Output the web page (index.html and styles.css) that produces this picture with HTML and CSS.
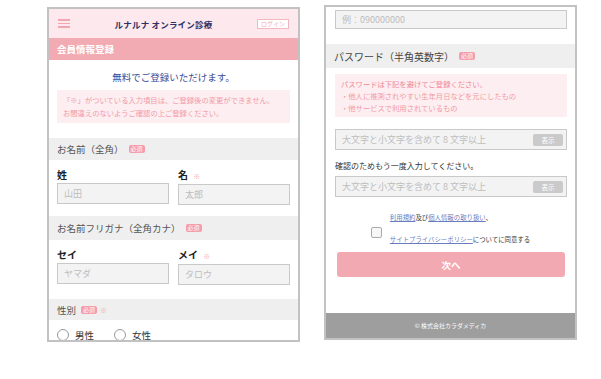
FILE: index.html
```html
<!DOCTYPE html>
<html lang="ja">
<head>
    <meta charset="UTF-8">
    <meta name="viewport" content="width=device-width, initial-scale=1.0">
    <title>会員情報登録</title>
    <link rel="stylesheet" href="styles.css">
</head>
<body>

    <div class="screens">

        <!-- 1画面目 -->
        <div class="phone phone-left">
            <div class="header">
                <div class="menu-btn"><span></span><span></span><span></span></div>
                <div class="logo">ルナルナ オンライン診療</div>
                <div class="login-btn">ログイン</div>
            </div>
            <div class="page-title">会員情報登録</div>

            <p class="lead">無料でご登録いただけます。</p>
            <div class="notice">
                「※」がついている入力項目は、ご登録後の変更ができません。<br>
                お間違えのないようご確認の上ご登録ください。
            </div>

            <div class="section-head first">お名前（全角）<span class="badge">必須</span></div>
            <div class="name-row">
                <div class="field">
                    <label>姓</label>
                    <div class="input">山田</div>
                </div>
                <div class="field">
                    <label>名 <span class="mark">※</span></label>
                    <div class="input">太郎</div>
                </div>
            </div>

            <div class="section-head kana">お名前フリガナ（全角カナ）<span class="badge">必須</span></div>
            <div class="name-row second">
                <div class="field">
                    <label>セイ</label>
                    <div class="input">ヤマダ</div>
                </div>
                <div class="field">
                    <label>メイ <span class="mark">※</span></label>
                    <div class="input">タロウ</div>
                </div>
            </div>

            <div class="section-head gender">性別<span class="badge">必須</span><span class="mark">※</span></div>
            <div class="radio-row">
                <span class="radio"></span><span class="radio-label">男性</span>
                <span class="radio"></span><span class="radio-label">女性</span>
            </div>
        </div>

        <!-- 2画面目 -->
        <div class="phone phone-right">
            <div class="input tel">例：090000000</div>

            <div class="section-head pass">パスワード（半角英数字）<span class="badge">必須</span></div>
            <div class="notice pass-notice">
                <strong>パスワードは下記を避けてご登録ください。</strong><br>
                ・他人に推測されやすい生年月日などを元にしたもの<br>
                ・他サービスで利用されているもの
            </div>

            <div class="input pass-input">大文字と小文字を含めて 8 文字以上<span class="show-btn">表示</span></div>
            <p class="confirm-text">確認のためもう一度入力してください。</p>
            <div class="input pass-input confirm">大文字と小文字を含めて 8 文字以上<span class="show-btn">表示</span></div>

            <div class="agree">
                <span class="checkbox"></span>
                <div class="agree-text">
                    <a href="#">利用規約</a>及び<a href="#">個人情報の取り扱い</a>、<br>
                    <a href="#">サイトプライバシーポリシー</a>についてに同意する
                </div>
            </div>

            <button class="next-btn">次へ</button>

            <div class="footer">© 株式会社カラダメディカ</div>
        </div>

    </div>

</body>
</html>
```

FILE: styles.css
```css
* {
    margin: 0;
    padding: 0;
    box-sizing: border-box;
    font-family: 'Noto Sans CJK JP', 'Noto Sans', sans-serif;
}

body {
    background-color: #fff;
    color: #333;
}

.screens {
    display: flex;
    align-items: flex-start;
    gap: 24px;
    padding-left: 47px;
}

.phone {
    width: 253px;
    height: 335px;
    border: 2px solid #c2c2c2;
    background-color: #fff;
    overflow: hidden;
}

.phone-left {
    margin-top: 7px;
}

.phone-right {
    margin-top: 5px;
    display: flex;
    flex-direction: column;
}

/* ヘッダー */
.header {
    height: 29px;
    background-color: #fde9ed;
    display: flex;
    align-items: center;
    padding: 0 9px 0 9px;
}

.menu-btn {
    width: 12px;
    display: flex;
    flex-direction: column;
    gap: 2px;
}

.menu-btn span {
    display: block;
    height: 1.5px;
    background-color: #f2a6b0;
}

.logo {
    flex: 1;
    text-align: center;
    font-size: 8.5px;
    font-weight: 700;
    color: #2d2f66;
    letter-spacing: 0.2px;
}

.login-btn {
    width: 32px;
    height: 10px;
    border: 1px solid #f3b7c0;
    background-color: #fff;
    color: #f3a8b2;
    font-size: 6px;
    line-height: 8px;
    text-align: center;
}

.page-title {
    height: 22px;
    line-height: 22px;
    background-color: #f2aab3;
    color: #fff;
    font-size: 9.5px;
    font-weight: 700;
    padding-left: 8px;
}

.lead {
    text-align: center;
    color: #3d4c97;
    font-size: 9.5px;
    line-height: 12px;
    padding: 11px 0 7px;
}

.notice {
    margin: 0 8px;
    background-color: #fdeef1;
    color: #f29aa6;
    font-size: 7.3px;
    line-height: 12.5px;
    padding: 4px 6px;
}

/* セクション見出し */
.section-head {
    background-color: #eeefee;
    color: #555;
    font-size: 9.5px;
    padding-left: 8px;
    display: flex;
    align-items: center;
}

.section-head.first {
    margin-top: 15px;
    height: 22px;
}

.section-head.kana {
    height: 24px;
}

.section-head.gender {
    height: 21px;
}

.badge {
    display: inline-block;
    width: 16px;
    height: 8px;
    background-color: #f59cab;
    color: #fff;
    font-size: 6px;
    line-height: 8px;
    text-align: center;
    border-radius: 2px;
    margin-left: 5px;
}

.mark {
    color: #f6a9b4;
    font-size: 7px;
    font-weight: 400;
    margin-left: 3px;
}

/* 名前入力 */
.name-row {
    display: grid;
    grid-template-columns: 1fr 1fr;
    gap: 9px;
    padding: 8px 8px 11px;
}

.name-row.second {
    padding: 8px 8px 14px;
}

.field label {
    display: block;
    font-size: 10px;
    font-weight: 700;
    color: #222;
    line-height: 14px;
    margin-bottom: 1px;
}

.input {
    height: 21px;
    background-color: #f3f3f3;
    border: 1px solid #c9c9c9;
    color: #bdbdbd;
    font-size: 9px;
    line-height: 19px;
    padding-left: 6px;
}

.radio-row {
    display: flex;
    align-items: center;
    padding: 9px 0 0 8px;
}

.radio {
    width: 12px;
    height: 12px;
    border: 1px solid #999;
    border-radius: 50%;
    margin-right: 6px;
}

.radio-label {
    font-size: 9.5px;
    line-height: 11px;
    color: #333;
    margin-right: 20px;
}

/* 2画面目 */
.tel {
    margin: 3px 8px 0 9px;
    height: 19px;
    line-height: 17px;
}

.section-head.pass {
    margin-top: 15px;
    height: 24px;
    font-size: 10px;
    color: #444;
}

.pass-notice {
    margin: 6px 8px 0 9px;
    line-height: 12px;
    padding: 4px 6px 3px;
}

.pass-notice strong {
    font-weight: 400;
    color: #f08797;
}

.pass-input {
    margin: 12px 8px 0 9px;
    display: flex;
    align-items: center;
    justify-content: space-between;
    padding-right: 3px;
}

.pass-input.confirm {
    margin-top: 3px;
}

.show-btn {
    width: 30px;
    height: 12px;
    background-color: #cacaca;
    color: #fff;
    font-size: 6.5px;
    line-height: 12px;
    text-align: center;
    border-radius: 2px;
}

.confirm-text {
    margin: 9px 0 0 9px;
    font-size: 8px;
    line-height: 14px;
    color: #333;
}

.agree {
    display: flex;
    justify-content: center;
    align-items: center;
    gap: 8px;
    padding-top: 10px;
}

.checkbox {
    width: 11px;
    height: 11px;
    border: 1px solid #aaa;
    border-radius: 2px;
    background-color: #f7f7f7;
    margin-top: 6px;
}

.agree-text {
    font-size: 6.4px;
    line-height: 22px;
    color: #333;
}

.agree-text a {
    color: #6a7cc0;
}

.next-btn {
    margin: 1px 10px 0 11px;
    height: 25px;
    border: none;
    border-radius: 3px;
    background-color: #f3a9b2;
    color: #fff;
    font-size: 9.5px;
    font-weight: 700;
}

.footer {
    margin-top: auto;
    height: 25px;
    line-height: 25px;
    background-color: #9e9e9e;
    color: #fff;
    font-size: 6px;
    text-align: center;
}
```
